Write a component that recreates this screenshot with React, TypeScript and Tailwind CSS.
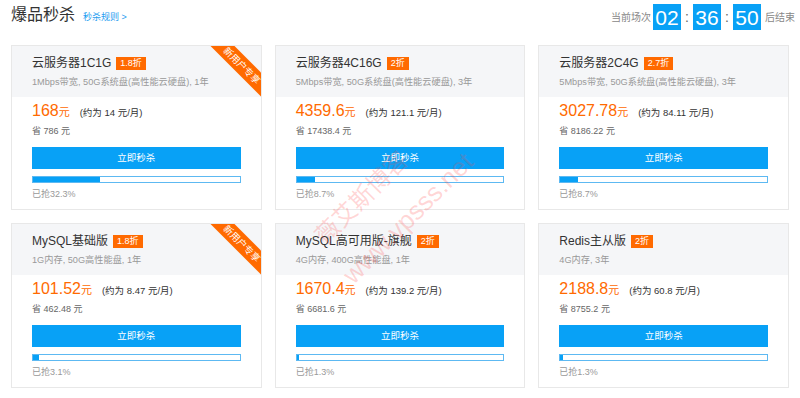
import React from 'react';

interface Deal {
  name: string;
  discount: string;
  spec: string;
  price: string;
  monthly: string;
  saved: string;
  sold: number;
  newUser?: boolean;
}

const deals: Deal[] = [
  { name: '云服务器1C1G', discount: '1.8折', spec: '1Mbps带宽, 50G系统盘(高性能云硬盘), 1年', price: '168', monthly: '14', saved: '786', sold: 32.3, newUser: true },
  { name: '云服务器4C16G', discount: '2折', spec: '5Mbps带宽, 50G系统盘(高性能云硬盘), 3年', price: '4359.6', monthly: '121.1', saved: '17438.4', sold: 8.7 },
  { name: '云服务器2C4G', discount: '2.7折', spec: '5Mbps带宽, 50G系统盘(高性能云硬盘), 3年', price: '3027.78', monthly: '84.11', saved: '8186.22', sold: 8.7 },
  { name: 'MySQL基础版', discount: '1.8折', spec: '1G内存, 50G高性能盘, 1年', price: '101.52', monthly: '8.47', saved: '462.48', sold: 3.1, newUser: true },
  { name: 'MySQL高可用版-旗舰', discount: '2折', spec: '4G内存, 400G高性能盘, 1年', price: '1670.4', monthly: '139.2', saved: '6681.6', sold: 1.3 },
  { name: 'Redis主从版', discount: '2折', spec: '4G内存, 3年', price: '2188.8', monthly: '60.8', saved: '8755.2', sold: 1.3 },
];

const DealCard: React.FC<{ deal: Deal }> = ({ deal }) => (
  <div className="relative overflow-hidden border border-[#e8e8e8] bg-white">
    {deal.newUser && (
      <div className="absolute right-[-26px] top-[11px] flex h-[17px] w-[90px] rotate-45 items-center justify-center bg-[#ff6a00] text-[9.5px] leading-none text-white">
        新用户专享
      </div>
    )}
    <div className="h-[51px] bg-[#f5f6f8] px-[20px] pt-[9px]">
      <div className="flex h-[16px] items-center">
        <span className="text-[12px] leading-[16px] text-[#333]">{deal.name}</span>
        <span className="ml-[5px] flex h-[13px] items-center bg-[#ff6a00] px-[4px] text-[9px] leading-none text-white">
          {deal.discount}
        </span>
      </div>
      <div className="mt-[5px] text-[9.2px] leading-[12px] text-[#999]">{deal.spec}</div>
    </div>
    <div className="px-[20px] pb-[9px] pt-[4px]">
      <div className="flex h-[20px] items-baseline">
        <span className="text-[16px] leading-[20px] text-[#ff6a00]">{deal.price}</span>
        <span className="text-[11px] text-[#ff6a00]">元</span>
        <span className="ml-[10px] text-[9.5px] text-[#333]">(约为 {deal.monthly} 元/月)</span>
      </div>
      <div className="mt-[4px] text-[9px] leading-[12px] text-[#666]">省 {deal.saved} 元</div>
      <button className="mt-[10px] flex h-[22px] w-full items-center justify-center bg-[#08a1f6] text-[9.5px] text-white">
        立即秒杀
      </button>
      <div className="mt-[7px] h-[7px] w-full border border-[#5db9f2] bg-white">
        <div className="h-full bg-[#08a1f6]" style={{ width: `${deal.sold}%` }} />
      </div>
      <div className="mt-[5px] text-[9px] leading-[12px] text-[#999]">已抢{deal.sold}%</div>
    </div>
  </div>
);

const TimeBox: React.FC<{ value: string }> = ({ value }) => (
  <span className="flex h-[26px] w-[28px] items-center justify-center bg-[#08a1f6] text-[21px] leading-none text-white">
    {value}
  </span>
);

export default function App() {
  return (
    <div className="relative h-[398px] w-[800px] overflow-hidden bg-white font-[family-name:'Liberation_Sans','Noto_Sans_CJK_SC',sans-serif]">
      <div className="flex h-[45px] justify-between pl-[11px] pr-[5px]">
        <div className="flex h-[30px] items-center">
          <span className="text-[16px] text-[#333]">爆品秒杀</span>
          <span className="ml-[8px] mt-[5px] text-[9px] text-[#1e9df0]">秒杀规则 &gt;</span>
        </div>
        <div className="flex items-center self-start pt-[4px] text-[10px] text-[#888]">
          <span className="mr-[2px] mt-[1px]">当前场次</span>
          <TimeBox value="02" />
          <span className="w-[12px] text-center text-[14px] text-[#666]">:</span>
          <TimeBox value="36" />
          <span className="w-[12px] text-center text-[14px] text-[#666]">:</span>
          <TimeBox value="50" />
          <span className="ml-[4px] mt-[1px]">后结束</span>
        </div>
      </div>

      <div className="grid grid-cols-3 gap-[13px] px-[11px]">
        {deals.map((d) => (
          <DealCard key={d.name} deal={d} />
        ))}
      </div>

      <div className="pointer-events-none absolute left-[302px] top-[186px] -rotate-45 text-[24px] leading-none text-[rgba(255,70,70,0.22)]">
        薇艾斯博客
      </div>
      <div className="pointer-events-none absolute left-[322px] top-[205px] -rotate-45 text-[26px] leading-none text-[rgba(255,70,70,0.22)]">
        www.vpsss.net
      </div>
    </div>
  );
}
